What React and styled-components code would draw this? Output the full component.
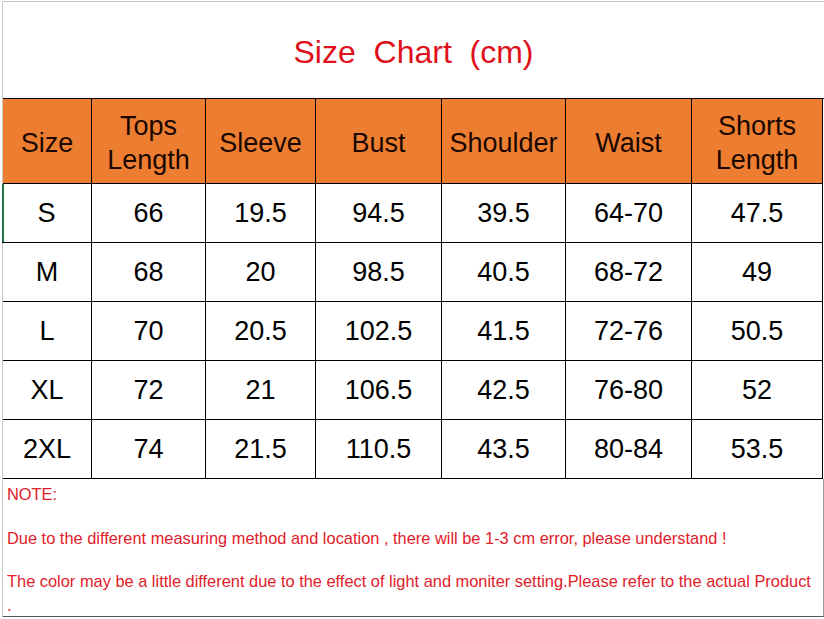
import React from "react";
import styled, { createGlobalStyle } from "styled-components";

const GlobalStyle = createGlobalStyle`
  html, body {
    margin: 0;
    padding: 0;
    background: #ffffff;
  }
  body {
    font-family: "Liberation Sans", Arial, sans-serif;
  }
`;

const Sheet = styled.div`
  width: 824px;
  height: 619px;
  box-sizing: border-box;
  padding-top: 1px;
  padding-left: 2px;
  overflow: hidden;
`;

const Frame = styled.div`
  width: 821px;
  border-top: 1px solid #c6c6c6;
  border-left: 1px solid #c6c6c6;
`;

const Title = styled.div`
  height: 96px;
  display: flex;
  align-items: center;
  justify-content: center;
  padding-top: 4px;
  box-sizing: border-box;
  color: #e0101a;
  font-size: 32px;
  white-space: pre;
`;

const Grid = styled.div`
  display: grid;
  grid-template-columns: 89px 114px 110px 126px 124px 126px 131px;
  border-top: 1px solid #000;
`;

const HeadCell = styled.div`
  height: 85px;
  box-sizing: border-box;
  background: #ed7d31;
  color: #1a0800;
  font-size: 27px;
  line-height: 34px;
  display: flex;
  align-items: center;
  justify-content: center;
  text-align: center;
  border-right: 1px solid #000;
  border-bottom: 1px solid #000;
  padding-top: 3px;
`;

const Cell = styled.div`
  height: 59px;
  box-sizing: border-box;
  color: #000;
  font-size: 27px;
  display: flex;
  align-items: center;
  justify-content: center;
  border-right: 1px solid #000;
  border-bottom: 1px solid #000;
  box-shadow: ${(p) => (p.$active ? "inset 2px 0 0 #217346" : "none")};
  margin-left: ${(p) => (p.$active ? "-1px" : "0")};
`;

const Notes = styled.div`
  height: 138px;
  box-sizing: border-box;
  border-right: 1px solid #9a9a9a;
  border-bottom: 1px solid #555;
  padding: 5px 0 0 4px;
  color: #e0202a;
  font-size: 16.4px;
  display: flex;
  flex-direction: column;
`;

const NoteLine = styled.div`
  line-height: 20px;
  margin-top: ${(p) => p.$gap || 0}px;
  white-space: nowrap;
`;

const headers = ["Size", "Tops\nLength", "Sleeve", "Bust", "Shoulder", "Waist", "Shorts\nLength"];

const rows = [
  ["S", "66", "19.5", "94.5", "39.5", "64-70", "47.5"],
  ["M", "68", "20", "98.5", "40.5", "68-72", "49"],
  ["L", "70", "20.5", "102.5", "41.5", "72-76", "50.5"],
  ["XL", "72", "21", "106.5", "42.5", "76-80", "52"],
  ["2XL", "74", "21.5", "110.5", "43.5", "80-84", "53.5"],
];

export default function App() {
  return (
    <>
      <GlobalStyle />
      <Sheet>
        <Frame>
          <Title>{"Size  Chart  (cm)"}</Title>
          <Grid>
            {headers.map((h) => (
              <HeadCell key={h}>
                <span>
                  {h.split("\n").map((part, i) => (
                    <div key={i}>{part}</div>
                  ))}
                </span>
              </HeadCell>
            ))}
            {rows.map((row, r) =>
              row.map((v, c) => (
                <Cell key={`${r}-${c}`} $active={r === 0 && c === 0}>
                  {v}
                </Cell>
              ))
            )}
          </Grid>
          <Notes>
            <NoteLine>NOTE:</NoteLine>
            <NoteLine $gap={24}>
              Due to the different measuring method and location , there will be 1-3 cm error, please understand !
            </NoteLine>
            <NoteLine $gap={23}>
              The color may be a little different due to the effect of light and moniter setting.Please refer to the actual Product
            </NoteLine>
            <NoteLine $gap={4}>.</NoteLine>
          </Notes>
        </Frame>
      </Sheet>
    </>
  );
}
